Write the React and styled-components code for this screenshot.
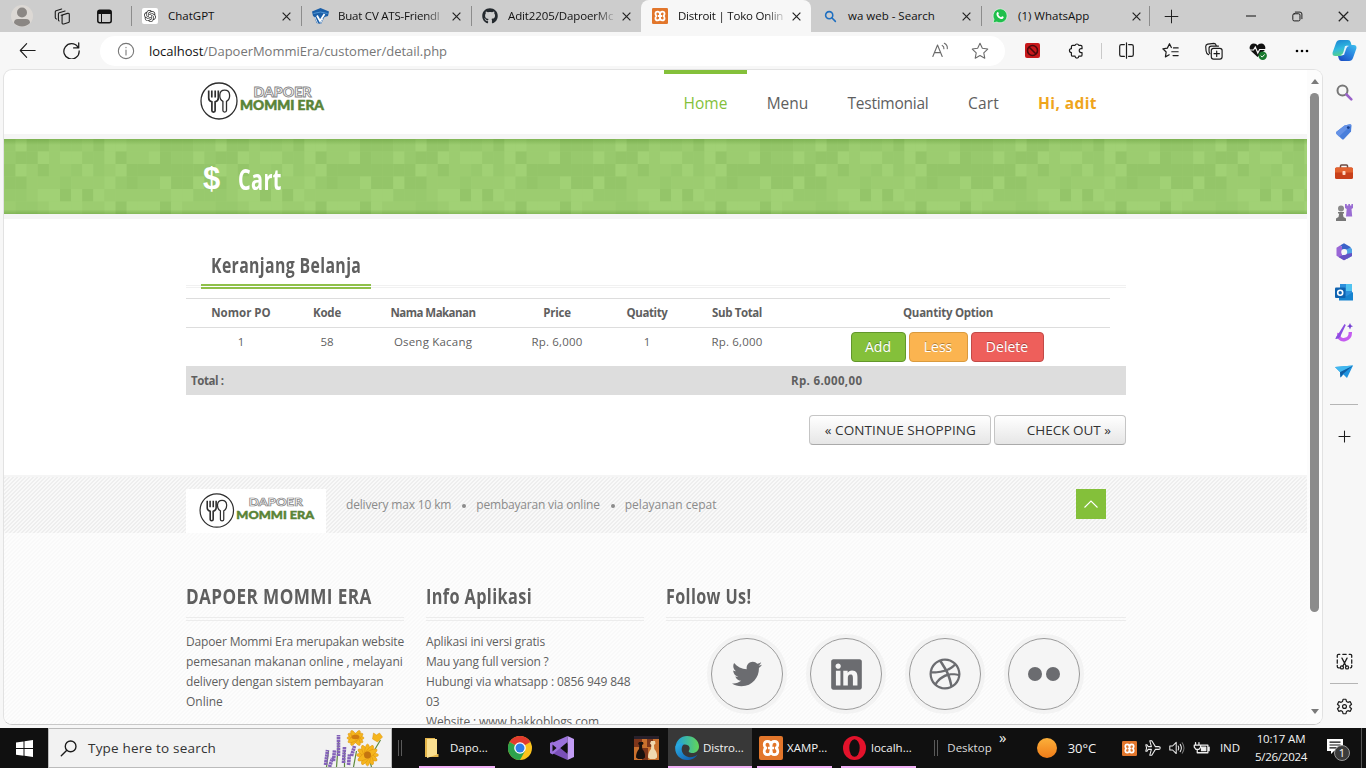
import React from "react";
import styled, { createGlobalStyle } from "styled-components";
import { FaGithub, FaTwitter, FaLinkedin, FaDribbble } from "react-icons/fa";
import { SiOpenai } from "react-icons/si";

const UI = `"Open Sans", "Noto Sans", sans-serif`;

const Global = createGlobalStyle`
  * { box-sizing: border-box; }
  body { margin: 0; background: #f7f7f7; font-family: ${UI}; overflow: hidden; }
  svg { display: block; flex: none; }
`;

const Screen = styled.div`
  width: 1366px;
  height: 768px;
  display: flex;
  flex-direction: column;
  overflow: hidden;
  background: #f7f7f7;
`;

/* A line of text whose size and tracking can be tuned */
const Label = styled.span`
  display: inline-block;
  white-space: nowrap;
  font-size: ${(p) => p.$size || 12}px;
  letter-spacing: ${(p) => p.$track || 0}px;
  color: ${(p) => p.$color || "inherit"};
  line-height: ${(p) => p.$lh || "20px"};
`;

const Slot = styled.div`
  width: ${(p) => p.$w}px;
  height: ${(p) => (p.$h ? p.$h + "px" : "100%")};
  padding-top: ${(p) => p.$pt || 0}px;
  display: flex;
  align-items: center;
  justify-content: center;
  flex: none;
`;

/* ---------- window tab strip ---------- */
const TabStrip = styled.div`
  height: 32px;
  flex: none;
  display: flex;
  background: #cdcdcd;
`;
const TabItem = styled.div`
  width: ${(p) => p.$w || 170}px;
  height: 32px;
  flex: none;
  display: flex;
  align-items: center;
  background: ${(p) => (p.$active ? "#f7f7f7" : "transparent")};
  border-radius: ${(p) => (p.$active ? "8px 8px 0 0" : "0")};
  &::before {
    content: "";
    width: 1px;
    height: 20px;
    background: ${(p) => (p.$line ? "#8c8c8c" : "transparent")};
    margin-right: 10px;
  }
`;
const TabTitle = styled.div`
  width: 106px;
  margin-left: 10px;
  white-space: nowrap;
  font-size: 11.5px;
  line-height: 20px;
  letter-spacing: ${(p) => p.$track || 0}px;
  color: #111;
  -webkit-mask-image: ${(p) => (p.$fade ? "linear-gradient(90deg,#000 82%,rgba(0,0,0,.15) 100%)" : "none")};
`;
const TabClose = styled.div`
  width: 10px;
  margin-left: 8px;
`;
const PlusCell = styled.div`
  width: 44px;
  display: flex;
  align-items: center;
  &::before {
    content: "";
    width: 1px;
    height: 20px;
    background: #8c8c8c;
    margin-right: 14px;
  }
`;
const Grow = styled.div`
  flex: 1;
`;

/* ---------- toolbar ---------- */
const Toolbar = styled.div`
  height: 37px;
  flex: none;
  display: flex;
  align-items: center;
  padding-left: 5px;
`;
const Address = styled.div`
  width: 905px;
  height: 30px;
  margin-left: 7px;
  border-radius: 15px;
  background: #fff;
  display: flex;
  align-items: center;
  padding: 0 5px 0 17px;
`;
const Url = styled.div`
  flex: 1;
  margin-left: 14px;
  font-size: 13px;
  letter-spacing: -0.02px;
  color: #767676;
  b { font-weight: 400; color: #111; }
`;
const ThinLine = styled.div`
  width: 1px;
  height: 16px;
  margin-left: 2px;
  background: #c9c9c9;
`;

/* ---------- window body ---------- */
const Body = styled.div`
  height: 659px;
  flex: none;
  display: flex;
  padding-bottom: 3px;
`;
const Viewport = styled.div`
  width: 1320px;
  height: 656px;
  flex: none;
  margin-left: 3px;
  border: 1px solid #e2e2e2;
  border-bottom: 1px solid #c8c8c8;
  border-radius: 9px;
  overflow: hidden;
  display: flex;
  background: #fff;
`;
const Page = styled.div`
  width: 1303px;
  flex: none;
  overflow: hidden;
`;
const ScrollCol = styled.div`
  width: 15px;
  flex: none;
  display: flex;
  flex-direction: column;
  align-items: center;
  background: #fcfcfc;
  padding: 9px 0 10px;
`;
const Thumb = styled.div`
  width: 9px;
  height: 519px;
  margin: 9px 0 auto;
  border-radius: 5px;
  background: #8b8b8b;
`;
const Sidebar = styled.div`
  width: 42px;
  display: flex;
  flex-direction: column;
  align-items: center;
  padding-top: 3px;
`;
const SideRule = styled.div`
  width: 28px;
  height: 1px;
  background: #b5b5b5;
  flex: none;
`;

/* ---------- site ---------- */
const Header = styled.header`
  height: 69px;
  border-bottom: 5px solid #f5f5f5;
  display: flex;
  padding-left: 196px;
`;
const Brand = styled.div`
  padding-top: 10px;
`;
const Nav = styled.nav`
  display: flex;
  margin-left: 334px;
`;
const NavItem = styled.a`
  height: 64px;
  width: ${(p) => p.$w}px;
  border-top: 4px solid ${(p) => (p.$active ? "#84c03a" : "transparent")};
  padding-top: 19px;
  text-align: center;
  font-size: 15.5px;
  line-height: 20px;
  letter-spacing: ${(p) => p.$track || 0}px;
  font-weight: ${(p) => (p.$user ? 700 : 400)};
  color: ${(p) => (p.$active ? "#84bf3b" : p.$user ? "#efa51c" : "#5e5e5e")};
`;
const Banner = styled.div`
  height: 75px;
  display: grid;
  background: #9ccb70;
  & > * { grid-area: 1 / 1; }
`;
const BannerTitle = styled.div`
  display: flex;
  align-items: center;
  padding: 5px 0 0 199px;
  color: #fff;
`;
const Dollar = styled.span`
  font: 700 31px/34px "Liberation Sans", sans-serif;
  width: 35px;
`;
const Fancy = styled.span`
  display: inline-block;
  white-space: nowrap;
  font-family: "Open Sans", sans-serif;
  font-weight: 700;
  font-size: ${(p) => p.$size}px;
  line-height: 30px;
  letter-spacing: 0.5px;
  transform: scaleX(${(p) => p.$x});
  transform-origin: left;
`;
const Content = styled.main`
  border-top: 5px solid #f5f5f5;
  height: 261px;
  padding: 25px 181px 0 182px;
`;
const TitleRow = styled.div`
  height: 44px;
  padding-left: 15px;
  background: linear-gradient(#f1f1f1, #f1f1f1) 0 41px / 100% 1px no-repeat,
    linear-gradient(#f1f1f1, #f1f1f1) 0 43px / 100% 1px no-repeat;
`;
const SectionTitle = styled.h3`
  margin: 0;
  width: 170px;
  height: 45px;
  padding: 5px 0 0 10px;
  color: #5f5f5f;
  border-bottom: 5px double #8fc04a;
`;
const Table = styled.div`
  margin-top: 10px;
`;
const Row = styled.div`
  width: 924px;
  display: grid;
  grid-template-columns: 110px 62px 150px 98px 82px 98px 324px;
  height: ${(p) => p.$h}px;
  border-top: 1px solid #ddd;
  padding-top: 4px;
`;
const Cell = styled.div`
  text-align: center;
  font-size: 11.5px;
  line-height: 20px;
  letter-spacing: ${(p) => p.$track || 0}px;
  font-weight: ${(p) => (p.$bold ? 700 : 400)};
  color: #5f5f5f;
  white-space: nowrap;
`;
const Options = styled.div`
  display: flex;
  justify-content: center;
  gap: 3px;
  padding-right: 2px;
`;
const Action = styled.button`
  width: ${(p) => p.$w}px;
  height: 30px;
  border: 1px solid ${(p) => p.$edge};
  border-radius: 4px;
  background: ${(p) => p.$bg};
  color: #fff;
  font: 400 14px/20px ${UI};
  padding: 0 0 1px;
  text-shadow: 0 -1px 0 rgba(0, 0, 0, 0.3);
`;
const TotalRow = styled.div`
  height: 29px;
  background: #ddd;
  display: grid;
  grid-template-columns: 600px 1fr;
  align-items: center;
  padding-left: 5px;
  font-weight: 700;
  color: #5f5f5f;
`;
const Links = styled.div`
  display: flex;
  justify-content: flex-end;
  gap: 3px;
  margin-top: 20px;
`;
const GreyButton = styled.button`
  width: ${(p) => p.$w}px;
  height: 30px;
  border: 1px solid #c5c5c5;
  border-bottom-color: #aaa;
  border-radius: 4px;
  background: linear-gradient(#fff, #e6e6e6);
  font: 400 13.5px/20px ${UI};
  letter-spacing: ${(p) => p.$track || 0}px;
  color: #333;
  text-align: right;
  padding: 0 14px 1px 0;
  white-space: nowrap;
`;
const hatch = (a, b) =>
  `linear-gradient(135deg, ${a} 25%, ${b} 25% 50%, ${a} 50% 75%, ${b} 75%) 0 0 / 4px 4px`;
const Strip = styled.div`
  height: 58px;
  background: ${hatch("#eeeeee", "#f9f9f9")};
  border-top: 2px solid #f5f5f5;
  display: flex;
  padding: 12px 0 0 182px;
`;
const FooterLogo = styled.div`
  width: 140px;
  height: 44px;
  background: #fff;
  padding: 2px 0 0 13px;
`;
const Perks = styled.div`
  width: 750px;
  padding: 6px 0 0 20px;
  display: flex;
  color: #8b8b8b;
`;
const Dot = styled.i`
  width: 4px;
  height: 4px;
  border-radius: 50%;
  background: #8b8b8b;
  margin: 9px 10px 0 11px;
`;
const UpButton = styled.div`
  width: 30px;
  height: 30px;
  background: #84c03a;
  display: flex;
  align-items: center;
  justify-content: center;
`;
const Footer = styled.footer`
  height: 195px;
  background: ${hatch("#f9f9f9", "#fdfdfd")};
  padding: 47px 0 0 182px;
  display: grid;
  grid-template-columns: 218px 218px 460px;
  column-gap: 22px;
  color: #5f5f5f;
`;
const FootTitle = styled.h3`
  margin: 0 0 11px;
  height: 41px;
  border-bottom: 4px double #ececec;
`;
const Line = styled.div`
  height: 20px;
  font-size: 12px;
  line-height: 20px;
  white-space: nowrap;
  letter-spacing: ${(p) => p.$track || 0}px;
`;
const Socials = styled.div`
  display: flex;
  gap: 19px;
  padding: 2px 0 0 41px;
`;
const Social = styled.div`
  width: 80px;
  height: 80px;
  border: 4px solid #f3f3f3;
  border-radius: 50%;
  display: flex;
  div {
    flex: 1;
    border: 1px solid #999;
    border-radius: 50%;
    background: #f5f5f5;
    display: flex;
    align-items: center;
    justify-content: center;
    color: #6b6c70;
  }
`;

/* ---------- taskbar ---------- */
const Taskbar = styled.div`
  height: 40px;
  flex: none;
  display: flex;
  align-items: center;
  background: #101010;
  color: #f3f3f3;
`;
const Search = styled.div`
  width: 344px;
  height: 40px;
  flex: none;
  background: #f2f2f2;
  border: 1px solid #bbb;
  color: #222;
  display: flex;
  align-items: center;
  padding: 0 8px 0 11px;
`;
const Grip = styled.div`
  width: 4px;
  height: 16px;
  flex: none;
  margin-left: ${(p) => p.$ml}px;
  border: 1px solid #5a5a5a;
  border-width: 0 1px;
`;
const Task = styled.div`
  width: ${(p) => p.$w}px;
  flex: none;
  margin-left: ${(p) => p.$ml || 0}px;
  height: 40px;
  padding: 2px 0 0 ${(p) => p.$pl || 2}px;
  display: flex;
  align-items: center;
  gap: ${(p) => p.$gap || 4}px;
  background: ${(p) => (p.$active ? "#383838" : "transparent")};
  border-bottom: 2px solid #f0b0f5;
`;
const Clock = styled.div`
  width: 68px;
  flex: none;
  display: flex;
  flex-direction: column;
  align-items: center;
`;
const Chevron = styled.div`
  width: 14px;
  height: 40px;
  flex: none;
  margin-left: -2px;
  padding-top: 1px;
  font-size: 15px;
  line-height: 16px;
`;
const EndLine = styled.div`
  width: 5px;
  height: 40px;
  flex: none;
  border-left: 1px solid #555;
`;

/* ---------- drawings ---------- */
const Cross = ({ s = 9, w = 1.3 }) => (
  <svg width={s} height={s} viewBox="0 0 10 10" stroke="#222" strokeWidth={w} fill="none">
    <path d="M.7.7l8.6 8.6M9.3.7L.7 9.3" />
  </svg>
);
const Ico = ({ s = 18, children, w = 1.3, c = "#1c1c1c" }) => (
  <svg width={s} height={s} viewBox="0 0 20 20" fill="none" stroke={c} strokeWidth={w} strokeLinecap="round" strokeLinejoin="round">
    {children}
  </svg>
);
const Xampp = ({ s = 16 }) => (
  <svg width={s} height={s} viewBox="0 0 24 24">
    <rect width="24" height="24" rx="2" fill="#e2762b" />
    <g fill="none" stroke="#fff" strokeWidth="2.7" strokeLinejoin="round">
      <path d="M12 9.300Q11.800 5.300 8.500 5.300T5.200 8.700q0 2.200 1.700 3.300-1.700 1.100-1.700 3.300 0 3.400 3.300 3.400T12 14.700" />
      <path d="M12 9.300q.2-4 3.500-4t3.300 3.400q0 2.200-1.700 3.300 1.700 1.100 1.700 3.300 0 3.400-3.300 3.400T12 14.700" />
      <path d="M9 12h6M12 9v6" />
    </g>
  </svg>
);
const Logo = ({ w = 130, h = 42 }) => (
  <svg width={w} height={h} viewBox="0 0 130 42">
    <g fill="none" stroke="#2e2e2e">
      <circle cx="19" cy="21" r="18" strokeWidth="1.3" fill="#fff" />
      <path d="M8.700 10.500v7.500q0 3 3.200 3.800v9q0 1.300 1.600 1.300t1.600-1.300v-9q3.200-.8 3.200-3.800v-7.500M11.800 10.500v7M15.200 10.500v7" strokeWidth="1.7" />
      <path d="M24.700 10.200c-6.500 0-6 9-1.800 11.200v9.200q0 1.500 1.800 1.500t1.800-1.500v-9.200c4.200-2.200 4.700-11.200-1.800-11.200z" strokeWidth="1.3" />
    </g>
    <text x="53.500" y="16.500" textLength="58" lengthAdjust="spacingAndGlyphs" fontFamily="Lato, sans-serif" fontWeight="900" fontSize="12.500" fill="#fff" stroke="#858585" strokeWidth=".8">DAPOER</text>
    <text x="40" y="30" textLength="84" lengthAdjust="spacingAndGlyphs" fontFamily="Lato, sans-serif" fontWeight="900" fontSize="12.500" fill="#5a8437" stroke="#5a8437" strokeWidth=".5">MOMMI ERA</text>
  </svg>
);

const MOSAIC = [
  "221300111333220331",
  "002203110322023301",
  "120210333333330131",
  "211102322033033111",
  "303011111100222100",
  "001103000301112210",
];
const TONES = ["#a1d175", "#9ccc70", "#98c96d", "#94c569"];
const Mosaic = () => (
  <svg width="1303" height="75">
    <defs>
      <pattern id="tiles" x="56" y="0" width="200" height="75" patternUnits="userSpaceOnUse">
        {MOSAIC.map((row, y) =>
          row.split("").map((t, x) => (
            <rect key={x + "-" + y} x={x * 11.111} y={y * 12.5} width="11.2" height="12.6" fill={TONES[+t]} />
          ))
        )}
      </pattern>
      <linearGradient id="shade" x1="0" x2="0" y1="0" y2="1">
        <stop offset="0" stopColor="#4f8a25" stopOpacity=".35" />
        <stop offset=".08" stopColor="#4f8a25" stopOpacity="0" />
        <stop offset=".94" stopColor="#4f8a25" stopOpacity="0" />
        <stop offset="1" stopColor="#4f8a25" stopOpacity=".35" />
      </linearGradient>
    </defs>
    <rect width="1303" height="75" fill="url(#tiles)" />
    <rect width="1303" height="75" fill="url(#shade)" />
  </svg>
);

const WhatsApp = () => (
  <svg width="16" height="16" viewBox="0 0 16 16">
    <path d="M1 15l1-3.700A7 7 0 1 1 4.800 14z" fill="#20bf4c" stroke="#e9f7ec" strokeWidth=".7" />
    <path d="M5.300 4.200c.7-.5 1.100 0 1.500 1.300.1.500-.5.800-.5 1.200.6 1.200 1.500 2 2.700 2.500.5 0 .8-1 1.200-.9 1.500.5 1.700.8 1.300 1.500-.5 1.200-1.900 1.500-3.200 1C6 9.900 4.800 8.500 4.500 6.600c-.1-1 .2-1.900.8-2.400z" fill="#fff" />
  </svg>
);
const GradCap = () => (
  <svg width="17" height="16" viewBox="0 0 17 16">
    <path d="M8.500 0L17 3.500l-1 4.500-3.500 1L9 16 4.500 15 2.500 9 1 8 0 3.500z" fill="#1b5fa8" />
    <path d="M1.500 5.500q7-3 14 0" stroke="#4f94d4" fill="none" />
    <path d="M5 7.500l3 5.500 4.500-7" stroke="#fff" strokeWidth="1.800" fill="none" />
    <path d="M3 9l2.500 6M11 10.500l-2.500 5" stroke="#fff" strokeWidth=".8" />
  </svg>
);
const Copilot = () => (
  <svg width="25" height="23" viewBox="0 0 25 23">
    <defs>
      <linearGradient id="cp1" x1="0" y1="0" x2="0.3" y2="1"><stop stopColor="#1b7fd0" /><stop offset=".6" stopColor="#2fb9e0" /><stop offset="1" stopColor="#57d08b" /></linearGradient>
      <linearGradient id="cp2" x1="1" y1="0" x2="0.2" y2="1"><stop stopColor="#3fc1ee" /><stop offset=".5" stopColor="#2a86e0" /><stop offset="1" stopColor="#1b4fc4" /></linearGradient>
    </defs>
    <path d="M8 1h8q2 0 2.700 2.200L19.500 6h-3q-2.200 0-3 2.200l-2.300 6.600Q10.300 17 8 17H3.300Q0 17 .6 13.500L4 4q1-3 4-3z" fill="url(#cp1)" />
    <path d="M17 22H9.500q-2 0-2.700-2.200L6 17h2.500q2.200 0 3-2.200l2.300-6.600Q14.700 6 17 6h4.700Q25 6 24.400 9.500L21 19q-1 3-4 3z" fill="url(#cp2)" />
    <path d="M13 7h4q-2 .4-2.700 2.400L12 16H8.500q2 0 2.800-2.400z" fill="#eefaff" opacity=".9" />
  </svg>
);

const SearchGlyph = () => (
  <svg width="17" height="17" viewBox="0 0 17 17" fill="none">
    <circle cx="6.500" cy="6.500" r="5" stroke="#777" strokeWidth="2" />
    <path d="M10.500 10.500l4.800 4.800" stroke="#9a62c9" strokeWidth="2.600" strokeLinecap="round" />
  </svg>
);
const TagGlyph = () => (
  <svg width="18" height="18" viewBox="0 0 18 18">
    <path d="M9.500 2.500L15 1.200q1.500 0 1.500 1.500L16 8.500 9 16q-1 1-2.200 0L1.500 11q-1-1.200 0-2.200z" fill="#4a7fdb" />
    <path d="M1.500 8.800l8-6.300L15 1.200q1 0 1.400.8L4 13.400 1.500 11q-1-1.200 0-2.200z" fill="#6592e6" />
    <circle cx="13.300" cy="4.600" r="1.400" fill="#173f8f" />
  </svg>
);
const ToolboxGlyph = () => (
  <svg width="18" height="16" viewBox="0 0 18 16">
    <path d="M5.500 4V2q0-1 1-1h5q1 0 1 1v2" fill="none" stroke="#6c4a42" strokeWidth="1.500" />
    <rect y="3.500" width="18" height="11.500" rx="1.500" fill="#c8401a" />
    <path d="M0 5q0-1.500 1.500-1.500h15Q18 3.500 18 5v3.500H0z" fill="#e2622f" />
    <rect x="7.500" y="7" width="3" height="4" rx=".8" fill="#ffd9c4" />
  </svg>
);
const GamesGlyph = () => (
  <svg width="18" height="18" viewBox="0 0 18 18">
    <path d="M10 1h1.800v1.500h1.500V1h1.700v1.500h1.400V1H18v4l-1.500 1 .7 7.500H11L11.700 6 10 5z" fill="#9a6dd3" />
    <circle cx="6" cy="5.500" r="3" fill="#8a8a8a" />
    <path d="M3 9h6v1.500H7.800l.7 3.500 2.500 1.500V18H1v-2.500L3.500 14l.7-3.500H3z" fill="#777" />
  </svg>
);
const M365Glyph = () => (
  <svg width="18" height="18" viewBox="0 0 18 18">
    <path d="M5 2.500L9 .3l6.500 3.800v5L11 6.500 7 8.500v-5z" fill="#3b62c9" />
    <path d="M5 2.500L1.500 4.800v8L9 17.300l3-1.800-5-3.500V3.500z" fill="#9a67d6" />
    <path d="M15.500 4.500L17 6v7l-5 3-5.500-3.200L11 11V6.700z" fill="#4fa4e6" />
    <path d="M9 17.300l-5.500-3.200L11 11l6-1v3z" fill="#6651c4" />
    <circle cx="9.200" cy="9" r="3" fill="#f7f7f7" />
  </svg>
);
const OutlookGlyph = () => (
  <svg width="18" height="17" viewBox="0 0 18 17">
    <path d="M5 0h12v14H5z" fill="#2c8fdc" />
    <path d="M11 0h6v7h-6z" fill="#50c3f0" />
    <path d="M4 16.500V8l7 4.500L18 8v8.500z" fill="#1683cf" />
    <rect y="3.500" width="10.500" height="10.500" rx="1" fill="#0e62b0" />
    <circle cx="5.200" cy="8.800" r="2.500" fill="none" stroke="#fff" strokeWidth="1.600" />
  </svg>
);
const DesignerGlyph = () => (
  <svg width="18" height="19" viewBox="0 0 18 19" fill="none">
    <path d="M4 10c-1 5 2 7.500 6 6.500 4-.9 5.500-4 5.300-7.500" stroke="#c55cf0" strokeWidth="3.400" />
    <path d="M9.500 1L3 11.500Q1 13 .3 16q3.500.3 5-2.500L10.800 2z" fill="#8a4ee0" />
    <path d="M15 0l1 2.300 2 .9-2 .9-1 2.400-1-2.400-2-.9 2-.9z" fill="#7640d2" />
  </svg>
);
const PlaneGlyph = () => (
  <svg width="18" height="14" viewBox="0 0 18 14">
    <path d="M0 2L18 .5 12 13 8.500 9.500 5.500 12.500 5 7z" fill="#1f93df" />
    <path d="M18 .5L5 7l.5 5.500L8 9z" fill="#0f5da3" />
    <path d="M0 2L18 .5 5 7z" fill="#42b8ef" />
  </svg>
);

const Flowers = () => (
  <svg width="61" height="37" viewBox="0 0 60 37">
    <path d="M4 37l2-16M14 37l2-25M22 37v-16M31 37l3-16M49 37l-5-18M58 10l-6 10" stroke="#5e8a3c" strokeWidth="1.200" fill="none" />
    <g stroke="#8362b8" strokeWidth="3.600" strokeDasharray="2.300 .5">
      <path d="M3 35l2-15M16 26V5M21 33l1-16M11 31l1-11M29 26l3-10M26 35l1-11M7 37l3-9" />
    </g>
    <g fill="#f5b51d" stroke="#dd920f" strokeWidth=".5">
      {[0, 30, 60, 90, 120, 150].map((a) => (
        <ellipse key={a} cx="45" cy="25" rx="11" ry="3" transform={`rotate(${a} 45 25)`} />
      ))}
      {[0, 30, 60, 120, 150].map((a) => (
        <ellipse key={a} cx="33" cy="8" rx="8.500" ry="2.600" transform={`rotate(${a} 33 8)`} />
      ))}
      <path d="M50 9l1-6 3 2 3-2 3 4-5 5z" />
    </g>
    <circle cx="45" cy="25" r="3.500" fill="#c47510" />
    <ellipse cx="33" cy="7" rx="4" ry="2.200" fill="#d07c10" />
  </svg>
);
const Chrome = () => (
  <svg width="24" height="24" viewBox="0 0 24 24">
    <circle cx="12" cy="12" r="12" fill="#fbc31c" />
    <path d="M12 12L1.600 6A12 12 0 0 1 22.400 6z" fill="#e33b2e" />
    <path d="M12 12L1.600 6A12 12 0 0 0 12 24l5-9z" fill="#2da34c" />
    <circle cx="12" cy="12" r="5.800" fill="#fff" />
    <circle cx="12" cy="12" r="4.500" fill="#2f7de9" />
  </svg>
);
const VStudio = () => (
  <svg width="24" height="24" viewBox="0 0 24 24">
    <path d="M0 7l2.500-1.500L17.500 18v6L3 17.500 0 17z" fill="#7a50b8" />
    <path d="M0 17l2.500 1.500L17.500 6V0L3 6.500 0 7z" fill="#9b72dc" />
    <path d="M17.500 0L24 3v18l-6.500 3z" fill="#c29cf5" />
    <path d="M17.500 7.500v9L11.700 12z" fill="#101010" />
    <path d="M2.500 8.500v7L6.500 12z" fill="#101010" />
  </svg>
);
const Chess = () => (
  <svg width="25" height="24" viewBox="0 0 25 24">
    <rect width="25" height="24" fill="#c9702d" />
    <path d="M0 0h25v3H0z" fill="#28202b" />
    <path d="M0 3h8v8H0zM13 3h6v8h-6zM8 12h6v12H8z" fill="#7d351a" />
    <path d="M5 6h4l.5 2-1.500 1 .3 4q3.200 3 2.700 8.500L9 23H4l-2-1.500Q2 16 5 13l.3-4L4 8z" fill="#17100e" />
    <path d="M17 5h4l.5 2.500L20 9l.3 4q3.200 3 2.700 8.500L21 23h-5l-2-1.500q0-5.500 3-8.500l.3-4L16 7.500z" fill="#f0d9b0" />
  </svg>
);
const Edge = () => (
  <svg width="24" height="24" viewBox="0 0 24 24">
    <defs>
      <linearGradient id="eg1"><stop stopColor="#1d9fe3" /><stop offset="1" stopColor="#63d657" /></linearGradient>
      <linearGradient id="eg2" x1="0" y1="0" x2="1" y2="1"><stop stopColor="#2db4e8" /><stop offset="1" stopColor="#0c50a5" /></linearGradient>
    </defs>
    <path d="M.5 11C1 4.500 6 0 12 0c7 0 12 5 12 10.500 0 4-3 6.500-6.500 6.500-3 0-4.500-1.200-3.500-2.500 1.500-2 .5-6-4-6-4 0-8 1.500-9.500 2.500z" fill="url(#eg1)" />
    <path d="M.3 10.500C2 7 6 6.500 9 8c-3 2.500-3.500 8 1 11.500 4 3 9 2 12.500-1C20 22.500 16.500 24 12 24 5 24-.7 18 .3 10.500z" fill="url(#eg2)" />
  </svg>
);
const OperaO = () => (
  <svg width="23" height="24" viewBox="0 0 23 24">
    <ellipse cx="11.500" cy="12" rx="11.500" ry="12" fill="#e3122b" />
    <ellipse cx="11.500" cy="12" rx="5.200" ry="8.800" fill="#101010" />
  </svg>
);

const tabs = [
  { t: "ChatGPT", icon: <svg width="16" height="16" viewBox="0 0 16 16"><rect width="16" height="16" rx="2" fill="#fff" /><SiOpenai x="2" y="2" size={12} color="#333" /></svg>, line: 1 },
  { t: "Buat CV ATS-Friendl", icon: <GradCap />, line: 1, fade: 1, k: -0.22 },
  { t: "Adit2205/DapoerMc", icon: <FaGithub size={16} color="#24292e" />, line: 1, fade: 1, k: -0.12 },
  { t: "Distroit | Toko Onlin", icon: <Xampp />, active: 1, fade: 1, k: -0.22 },
  { t: "wa web - Search", icon: <Ico s={13} c="#1f6fc0" w={2.4}><circle cx="8" cy="8" r="5.500" /><path d="M12 12l5.500 5.500" /></Ico> },
  { t: "(1) WhatsApp", icon: <WhatsApp />, line: 1, w: 168 },
];
const heads = [["Nomor PO", 0], ["Kode", -0.2], ["Nama Makanan", -0.55], ["Price", -0.2], ["Quatity", -0.4], ["Sub Total", -0.4], ["Quantity Option", -0.25]];
const cells = [["1", 0], ["58", 0], ["Oseng Kacang", 0.2], ["Rp. 6,000", 0.2], ["1", 0], ["Rp. 6,000", 0.2]];

export default function App() {
  return (
    <Screen>
      <Global />
      <TabStrip>
        <Slot $w={44}>
          <svg width="22" height="22" viewBox="0 0 22 22">
            <circle cx="11" cy="11" r="11" fill="#dcd8d4" />
            <circle cx="11" cy="7.500" r="5" fill="#8b8784" />
            <path d="M3 18q0-4 4-4h8q4 0 4 4a11 11 0 0 1-16 0z" fill="#8b8784" />
          </svg>
        </Slot>
        <Slot $w={37}>
          <Ico s={17}>
            <path d="M8.500 8.500L16 6.300q2-.3 2 1.500v8q0 1-1 1.300l-5.500 1.700q-2 .4-2-1.500V9.800q0-1 .8-1.300zM6 15.300q-.8-.4-.8-1.500V7q0-1 1-1.300L13 3.500M3 13q-1.500-.4-1.500-1.800V4.500q0-1 1-1.300L9 1.200" />
          </Ico>
        </Slot>
        <Slot $w={46}>
          <svg width="15" height="15" viewBox="0 0 15 15" fill="none" stroke="#111" strokeWidth="1.500">
            <rect x=".8" y="1.300" width="13.400" height="12.500" rx="2" />
            <path d="M1 2.800h13M1 4h13" strokeWidth="2" />
            <path d="M4.500 5v8.500" strokeWidth="1" />
          </svg>
        </Slot>
        <Slot $w={4} />
        {tabs.map((t) => (
          <TabItem key={t.t} $active={t.active} $line={t.line} $w={t.w}>
            <Slot $w={16}>{t.icon}</Slot>
            <TabTitle $fade={t.fade} $track={t.k}>{t.t}</TabTitle>
            <TabClose><Cross s={9} /></TabClose>
          </TabItem>
        ))}
        <PlusCell><Ico s={15}><path d="M10 1.500v17M1.500 10h17" /></Ico></PlusCell>
        <Grow />
        <Slot $w={46}><svg width="10" height="2"><path d="M0 1h10" stroke="#111" /></svg></Slot>
        <Slot $w={46}><Ico s={11} w={1.8}><rect x="1.500" y="5" width="13" height="13" rx="2.500" /><path d="M6 2h8.500Q18 2 18 5.500V14" /></Ico></Slot>
        <Slot $w={46}><Cross s={11} w={1.1} /></Slot>
      </TabStrip>

      <Toolbar>
        <Slot $w={45}><Ico s={17}><path d="M19 10H1.500M9 2L1.500 10 9 18" /></Ico></Slot>
        <Slot $w={43}><Ico s={17} w={1.5}><path d="M17.500 6A9 9 0 1 0 19 10.500M18.500 1v6h-6" /></Ico></Slot>
        <Address>
          <Ico s={18} c="#777" w={1.2}><circle cx="10" cy="10" r="8.500" /><path d="M10 9v5.500M10 6v.3" /></Ico>
          <Url><b>localhost</b>/DapoerMommiEra/customer/detail.php</Url>
          <Slot $w={40}>
            <Ico s={17} c="#6a6a6a"><path d="M1 17L6.500 3.500 12 17M3 12.500h7M12 4q2.300 1 2 4M14.500 1.500q4 2 3.500 6.500" /></Ico>
          </Slot>
          <Slot $w={40}>
            <Ico s={18} c="#6a6a6a" w={1.2}><path d="M10 1.500l2.600 5.500 6 .8-4.400 4.200 1.100 6-5.300-3-5.300 3 1.100-6L1.400 7.800l6-.8z" /></Ico>
          </Slot>
        </Address>
        <Slot $w={6} />
        <Slot $w={43}>
          <svg width="15" height="15" viewBox="0 0 15 15">
            <rect width="15" height="15" rx="2" fill="#c8191c" />
            <circle cx="7.500" cy="7.500" r="5" fill="none" stroke="#4c0b0d" strokeWidth="1.600" />
            <path d="M4 4l7 7" stroke="#4c0b0d" strokeWidth="1.600" />
          </svg>
        </Slot>
        <Slot $w={45}>
          <Ico s={17} w={1.4}><path d="M5.500 4h2.800a2.300 2.300 0 0 1 4.400 0H15q1.500 0 1.500 1.500v2.300h-1a2.300 2.300 0 0 0 0 4.600h1v2.800q0 1.500-1.500 1.500h-2.300a2.200 2.200 0 0 1-4.400 0H5.500Q4 16.700 4 15.200v-2.800a2.300 2.300 0 0 1 0-4.600V5.500Q4 4 5.500 4z" /></Ico>
        </Slot>
        <ThinLine />
        <Slot $w={48}>
          <Ico s={17} w={1.4}><path d="M7.500 3H4Q2 3 2 5v10q0 2 2 2h3.500M12.500 3H16q2 0 2 2v10q0 2-2 2h-3.500M10 1v18" /></Ico>
        </Slot>
        <Slot $w={41}>
          <Ico s={17} w={1.4}><path d="M11 6.500L8.800 2 6.300 7.200 1 8l3.900 3.800L4 17.500l4.500-2.400M13.500 7h5.500M11.500 11.500H19M13 16h6" /></Ico>
        </Slot>
        <Slot $w={46}>
          <Ico s={18} w={1.3}><path d="M4 14Q1.500 13 1.200 10L.8 5Q.8 2.800 3 2.300L10 1.500q2 0 2.500 2.500M5.500 13q-1-1-1-3V7q0-2.500 2.500-2.500h8" /><rect x="7" y="7" width="12" height="12" rx="2.500" /><path d="M13 10v6M10 13h6" /></Ico>
        </Slot>
        <Slot $w={42}>
          <svg width="18" height="18" viewBox="0 0 18 18">
            <path d="M8.500 15L1.500 8.500C-.8 5.500 1.500 1.500 4.800 1.500c1.800 0 3 .8 3.700 2 .7-1.200 2-2 3.700-2 3.300 0 5.500 4 3.300 7z" fill="#111" />
            <path d="M0 8h4.500l1.800-3 2.500 6 1.800-3.500H17" fill="none" stroke="#f7f7f7" strokeWidth="1.200" />
            <circle cx="13.700" cy="13.700" r="4.200" fill="#197a2e" />
            <path d="M11.800 13.700l1.400 1.400 2.500-2.700" fill="none" stroke="#fff" />
          </svg>
        </Slot>
        <Slot $w={46}>
          <svg width="14" height="4"><circle cx="2" cy="2" r="1.300" /><circle cx="7" cy="2" r="1.300" /><circle cx="12" cy="2" r="1.300" /></svg>
        </Slot>
        <Slot $w={38}><Copilot /></Slot>
      </Toolbar>

      <Body>
        <Viewport>
          <Page>
            <Header>
              <Brand><Logo /></Brand>
              <Nav>
                <NavItem $active $w={83} $track={0.1}>Home</NavItem>
                <NavItem $w={81}>Menu</NavItem>
                <NavItem $w={120} $track={-0.25}>Testimonial</NavItem>
                <NavItem $w={71} $track={0.2}>Cart</NavItem>
                <NavItem $user $w={97} $track={0.4}>Hi, adit</NavItem>
              </Nav>
            </Header>
            <Banner>
              <Mosaic />
              <BannerTitle>
                <Dollar>$</Dollar>
                <Fancy $size={28} $x={0.71}>Cart</Fancy>
              </BannerTitle>
            </Banner>
            <Content>
              <TitleRow>
                <SectionTitle><Fancy $size={22} $x={0.72}>Keranjang Belanja</Fancy></SectionTitle>
              </TitleRow>
              <Table>
                <Row $h={29}>
                  {heads.map(([c, k]) => (
                    <Cell key={c} $bold $track={k}>{c}</Cell>
                  ))}
                </Row>
                <Row $h={39}>
                  {cells.map(([c, k], i) => (
                    <Cell key={i} $track={k}>{c}</Cell>
                  ))}
                  <Options>
                    <Action $w={55} $bg="#84c03a" $edge="#62962b">Add</Action>
                    <Action $w={59} $bg="#fbb450" $edge="#d99a3e">Less</Action>
                    <Action $w={73} $bg="#ee5f5b" $edge="#c24a47">Delete</Action>
                  </Options>
                </Row>
                <TotalRow>
                  <Label $size={11.5} $track={-0.4}>Total :</Label>
                  <Label $size={11.5} $track={0.35}>Rp. 6.000,00</Label>
                </TotalRow>
              </Table>
              <Links>
                <GreyButton $w={182} $track={0.1}>« CONTINUE SHOPPING</GreyButton>
                <GreyButton $w={132}>CHECK OUT »</GreyButton>
              </Links>
            </Content>
            <Strip>
              <FooterLogo><Logo w={121} h={39} /></FooterLogo>
              <Perks>
                <Label $track={-0.17}>delivery max 10 km</Label><Dot />
                <Label $track={-0.19}>pembayaran via online</Label><Dot />
                <Label>pelayanan cepat</Label>
              </Perks>
              <UpButton><svg width="14" height="8" viewBox="0 0 14 8"><path d="M.5 7.500L7 1l6.500 6.500" fill="none" stroke="#fff" strokeWidth="1.100" /></svg></UpButton>
            </Strip>
            <Footer>
              <div>
                <FootTitle><Fancy $size={22} $x={0.78}>DAPOER MOMMI ERA</Fancy></FootTitle>
                <Line $track={-0.15}>Dapoer Mommi Era merupakan website</Line>
                <Line $track={-0.06}>pemesanan makanan online , melayani</Line>
                <Line $track={-0.15}>delivery dengan sistem pembayaran</Line>
                <Line>Online</Line>
              </div>
              <div>
                <FootTitle><Fancy $size={22} $x={0.74}>Info Aplikasi</Fancy></FootTitle>
                <Line $track={-0.16}>Aplikasi ini versi gratis</Line>
                <Line $track={-0.22}>Mau yang full version ?</Line>
                <Line $track={-0.12}>Hubungi via whatsapp : 0856 949 848</Line>
                <Line>03</Line>
                <Line $track={-0.12}>Website : www.hakkoblogs.com</Line>
              </div>
              <div>
                <FootTitle><Fancy $size={22} $x={0.735}>Follow Us!</Fancy></FootTitle>
                <Socials>
                  <Social><div><FaTwitter size={30} /></div></Social>
                  <Social><div><FaLinkedin size={35} /></div></Social>
                  <Social><div><FaDribbble size={32} /></div></Social>
                  <Social><div><svg width="32" height="14"><circle cx="7" cy="7" r="7" fill="#6b6c70" /><circle cx="25" cy="7" r="7" fill="#6b6c70" /></svg></div></Social>
                </Socials>
              </div>
            </Footer>
          </Page>
          <ScrollCol>
            <svg width="8" height="5"><path d="M0 5l4-5 4 5z" fill="#7a7a7a" /></svg>
            <Thumb />
            <svg width="8" height="5"><path d="M0 0l4 5 4-5z" fill="#7a7a7a" /></svg>
          </ScrollCol>
        </Viewport>
        <Sidebar>
          {[SearchGlyph, TagGlyph, ToolboxGlyph, GamesGlyph, M365Glyph, OutlookGlyph, DesignerGlyph, PlaneGlyph].map((G, i) => (
            <Slot key={i} $w={42} $h={40}><G /></Slot>
          ))}
          <Slot $w={28} $h={12} />
          <SideRule />
          <Slot $w={42} $h={63}><Ico s={13} w={1.6}><path d="M10 1.500v17M1.500 10h17" /></Ico></Slot>
          <Grow />
          <Slot $w={42} $h={44}>
            <Ico s={17} w={1.5}><path d="M1.500 5V3q0-1.500 1.500-1.500h1.500M8 1.500h4M15.500 1.500H17q1.500 0 1.500 1.500v2M1.500 8v4M18.500 8v4M1.500 14.500V16q0 1.500 1.500 1.500h1M18.500 14.500V16q0 1.500-1.500 1.500M7 6l5 9.500M13 6l-5 9.500" /><circle cx="7" cy="17" r="1.800" /><circle cx="13" cy="17" r="1.800" /></Ico>
          </Slot>
          <SideRule />
          <Slot $w={42} $h={41} $pt={3}>
            <Ico s={17} w={1.4}><path d="M8.300 1.500h3.400l.6 2.600 1.700 1 2.600-.8 1.700 3-2 1.800v1.800l2 1.800-1.700 3-2.600-.8-1.700 1-.6 2.600H8.300l-.6-2.600-1.700-1-2.600.8-1.700-3 2-1.800V9.100l-2-1.800 1.700-3 2.600.8 1.700-1z" /><circle cx="10" cy="10" r="2.300" /></Ico>
          </Slot>
        </Sidebar>
      </Body>

      <Taskbar>
        <Slot $w={48}>
          <svg width="17" height="17" viewBox="0 0 17 17" fill="#fff"><path d="M0 2.400l7.500-1v6.700H0zM8.500 1.200L17 0v8.100H8.500zM0 9h7.500v6.700L0 14.700zM8.500 9H17v8l-8.500-1.200z" /></svg>
        </Slot>
        <Search>
          <Ico s={17} w={1.6}><circle cx="12.500" cy="7.500" r="6.300" /><path d="M8 12L1.500 18.500" /></Ico>
          <Slot $w={11} />
          <Label $size={13.5} $track={0.2} $color="#333">Type here to search</Label>
          <Grow />
          <Flowers />
        </Search>
        <Grip $ml={6} />
        <Task $ml={17} $w={76} $pl={6} $gap={11}>
          <svg width="14" height="20" viewBox="0 0 14 20"><path d="M0 0h10v16h3.500v3H0z" fill="#e4b54a" /><path d="M2 1h10v15.500L2 20z" fill="#fbdf8f" /></svg>
          <Label $size={11.5}>Dapo...</Label>
        </Task>
        <Slot $w={50}><Chrome /></Slot>
        <Slot $w={34}><VStudio /></Slot>
        <Slot $w={55} />
        <Chess />
        <Slot $w={9} />
        <Task $active $w={84} $pl={7}><Edge /><Label $size={11.5} $track={-0.1}>Distro...</Label></Task>
        <Task $ml={5} $w={75}><Xampp s={24} /><Label $size={11.5}>XAMP...</Label></Task>
        <Task $ml={9} $w={75} $gap={5}><OperaO /><Label $size={11.5}>localh...</Label></Task>
        <Grip $ml={18} />
        <Slot $w={63}><Label $size={11.5} $color="#ddd">Desktop</Label></Slot>
        <Chevron>»</Chevron>
        <Slot $w={24} />
        <svg width="20" height="20"><defs><linearGradient id="sun" x2="0" y2="1"><stop stopColor="#fbb03b" /><stop offset="1" stopColor="#f07c18" /></linearGradient></defs><circle cx="10" cy="10" r="10" fill="url(#sun)" /></svg>
        <Slot $w={50}><Label $size={13}>30°C</Label></Slot>
        <Grow />
        <Slot $w={24}><Xampp s={15} /></Slot>
        <Slot $w={24}><Ico s={16} c="#eee" w={1.3}><path d="M19 10q0-1.700-2-1.700h-4L8.500 1H6l2 7.300H4L2.500 6H1l1 4-1 4h1.500L4 11.700h4L6 19h2.500l4.500-7.300h4q2 0 2-1.700z" /></Ico></Slot>
        <Slot $w={24}><Ico s={16} c="#eee" w={1.3}><path d="M1 7.500h3.500L9 3v14l-4.500-4.500H1zM11.500 7.500q1.500 2.500 0 5M14 5.500q3 4.500 0 9" /><path d="M16.500 3.500q4.500 6.500 0 13" stroke="#777" /></Ico></Slot>
        <Slot $w={24}><Ico s={17} c="#eee" w={1.5}><path d="M8 6h9.500v9H5v-3M19 8.500v4M3 3v3M7 3v3M1.500 6H9v2.500L7 11H3.500L1.500 8.500z" /><path d="M10 8.500h5v4h-5z" fill="#eee" /></Ico></Slot>
        <Slot $w={34}><Label $size={11.5}>IND</Label></Slot>
        <Clock>
          <Label $size={11.5} $track={-0.15} $lh="18px">10:17 AM</Label>
          <Label $size={11.5} $track={-0.25} $lh="18px">5/26/2024</Label>
        </Clock>
        <Slot $w={46}>
          <svg width="26" height="26" viewBox="0 0 26 26">
            <path d="M2 4h16v12H9l-3 3v-3H2z" fill="#fff" />
            <path d="M4.500 7.200h11M4.500 10h11M4.500 12.800h7" stroke="#101010" strokeWidth="1.200" />
            <circle cx="17" cy="18" r="7.500" fill="#3b3b3b" stroke="#999" />
            <text x="17" y="22" textAnchor="middle" fontSize="11" fill="#fff" fontFamily="Open Sans, sans-serif">1</text>
          </svg>
        </Slot>
        <EndLine />
      </Taskbar>
    </Screen>
  );
}
